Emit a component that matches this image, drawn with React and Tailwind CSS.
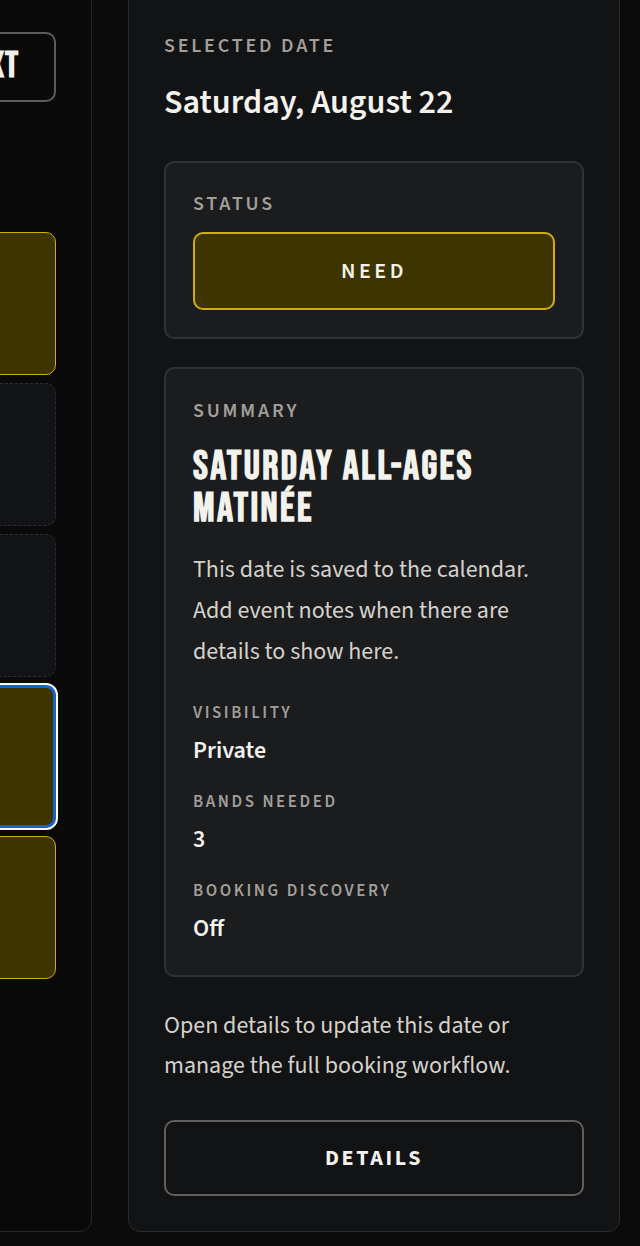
import React from 'react';

const sans = "font-['Source_Sans_3','Source_Sans_Pro','Lato',sans-serif]";
const display = "font-['Bebas_Neue','Liberation_Sans_Narrow','Arial_Narrow',sans-serif]";

const weekdays = ['SUN', 'MON', 'TUE', 'WED', 'THU', 'FRI', 'SAT'];

// August, starting on a Saturday
const weeks = [
    [null, null, null, null, null, null, { day: 1, status: 'need' }],
    [2, 3, 4, 5, 6, 7, 8].map((d) => ({ day: d, status: d === 6 ? 'need' : 'open' })),
    [9, 10, 11, 12, 13, 14, 15].map((d) => ({ day: d, status: 'open' })),
    [16, 17, 18, 19, 20, 21, 22].map((d) => ({ day: d, status: d === 22 || d === 20 ? 'need' : 'open' })),
    [23, 24, 25, 26, 27, 28, 29].map((d) => ({ day: d, status: d === 29 ? 'need' : 'open' })),
];

const DayCell = ({ cell }) => {
    if (!cell) return <div className="h-[143px]" />;
    const selected = cell.day === 22;
    let look = 'bg-[#121316] border border-dashed border-[#2c2d30]';
    if (cell.status === 'need') look = 'bg-[#3d3400] border border-[#cfae06]';
    if (selected) look = 'bg-[#3d3400] border-[3px] border-[#1463d6] outline-2 outline-white';
    return (
        <button className={`h-[143px] rounded-[10px] p-2 text-left align-top ${look}`}>
            <span className="text-[13px] text-[#8a8a8a]">{cell.day}</span>
        </button>
    );
};

const Label = ({ children, className = '' }) => (
    <p className={`text-[20px] font-semibold uppercase leading-7 tracking-[0.14em] text-[#a29f9a] ${className}`}>{children}</p>
);

const Field = ({ label, value }) => (
    <div>
        <p className="text-[17px] font-semibold uppercase leading-6 tracking-[0.15em] text-[#a29f9a]">{label}</p>
        <p className="mt-3 text-[24px] font-semibold leading-7 text-[#f4f2ed]">{value}</p>
    </div>
);

const App = () => {
    return (
        <div className={`min-h-screen overflow-hidden bg-[#0b0b0b] ${sans}`}>
            <div className="-mt-4 flex gap-9 pb-[15px] pr-5">
                {/* month grid, scrolled so only Saturday shows */}
                <div className="-ml-[619px] w-[711px] shrink-0 rounded-xl border border-[#262626] bg-[#0a0a0a] pl-6 pr-[35px] pt-[47px]">
                    <div className="flex justify-end">
                        <button className={`h-[70px] rounded-[10px] border-2 border-[#5c5c5c] pl-6 pr-[35px] text-[36px] leading-none tracking-wide text-[#f2f0ea] ${display} font-bold`}>
                            NEXT
                        </button>
                    </div>
                    <div className="mt-[92px] grid grid-cols-7 gap-2">
                        {weekdays.map((w) => (
                            <span key={w} className="text-[12px] font-semibold tracking-[0.12em] text-[#8c8c8c]">{w}</span>
                        ))}
                    </div>
                    <div className="mt-5 grid grid-cols-7 gap-2">
                        {weeks.flat().map((cell, i) => (
                            <DayCell key={i} cell={cell} />
                        ))}
                    </div>
                </div>

                {/* selected date */}
                <div className="w-[492px] shrink-0 rounded-xl border border-[#2a2b2d] bg-[#121315] px-[35px] pb-[35px] pt-[47px]">
                    <Label>Selected Date</Label>
                    <h2 className="mt-[23px] text-[34px] font-semibold leading-10 text-[#f4f2ed]">Saturday, August 22</h2>

                    <div className="mt-[38px] rounded-[10px] border-2 border-[#313234] bg-[#1b1c1e] px-[27px] pb-[27px] pt-[27px]">
                        <Label>Status</Label>
                        <button className="mt-[14px] h-[78px] w-full rounded-[10px] border-2 border-[#cfae06] bg-[#3d3400] text-[22px] font-semibold tracking-[0.16em] text-[#f4f2ed]">
                            NEED
                        </button>
                    </div>

                    <div className="mt-7 rounded-[10px] border-2 border-[#313234] bg-[#1b1c1e] px-[27px] pb-8 pt-7">
                        <Label>Summary</Label>
                        <h3 className={`mt-[22px] text-[40px] font-bold uppercase leading-[41.5px] tracking-[0.06em] text-[#f4f2ed] ${display}`}>
                            Saturday All-Ages Matinée
                        </h3>
                        <p className="mt-[19px] text-[24px] leading-[41px] text-[#d5d2cb]">
                            This date is saved to the calendar. Add event notes when there are details to show here.
                        </p>
                        <div className="mt-[29px] flex flex-col gap-[25px]">
                            <Field label="Visibility" value="Private" />
                            <Field label="Bands Needed" value="3" />
                            <Field label="Booking Discovery" value="Off" />
                        </div>
                    </div>

                    <p className="mt-[29px] text-[24px] leading-10 text-[#d5d2cb]">
                        Open details to update this date or manage the full booking workflow.
                    </p>
                    <button className="mt-[34px] h-[76px] w-full rounded-[10px] border-2 border-[#5f5f5f] text-[22px] font-bold tracking-[0.12em] text-[#f4f2ed]">
                        DETAILS
                    </button>
                </div>
            </div>
        </div>
    );
};

export default App;
